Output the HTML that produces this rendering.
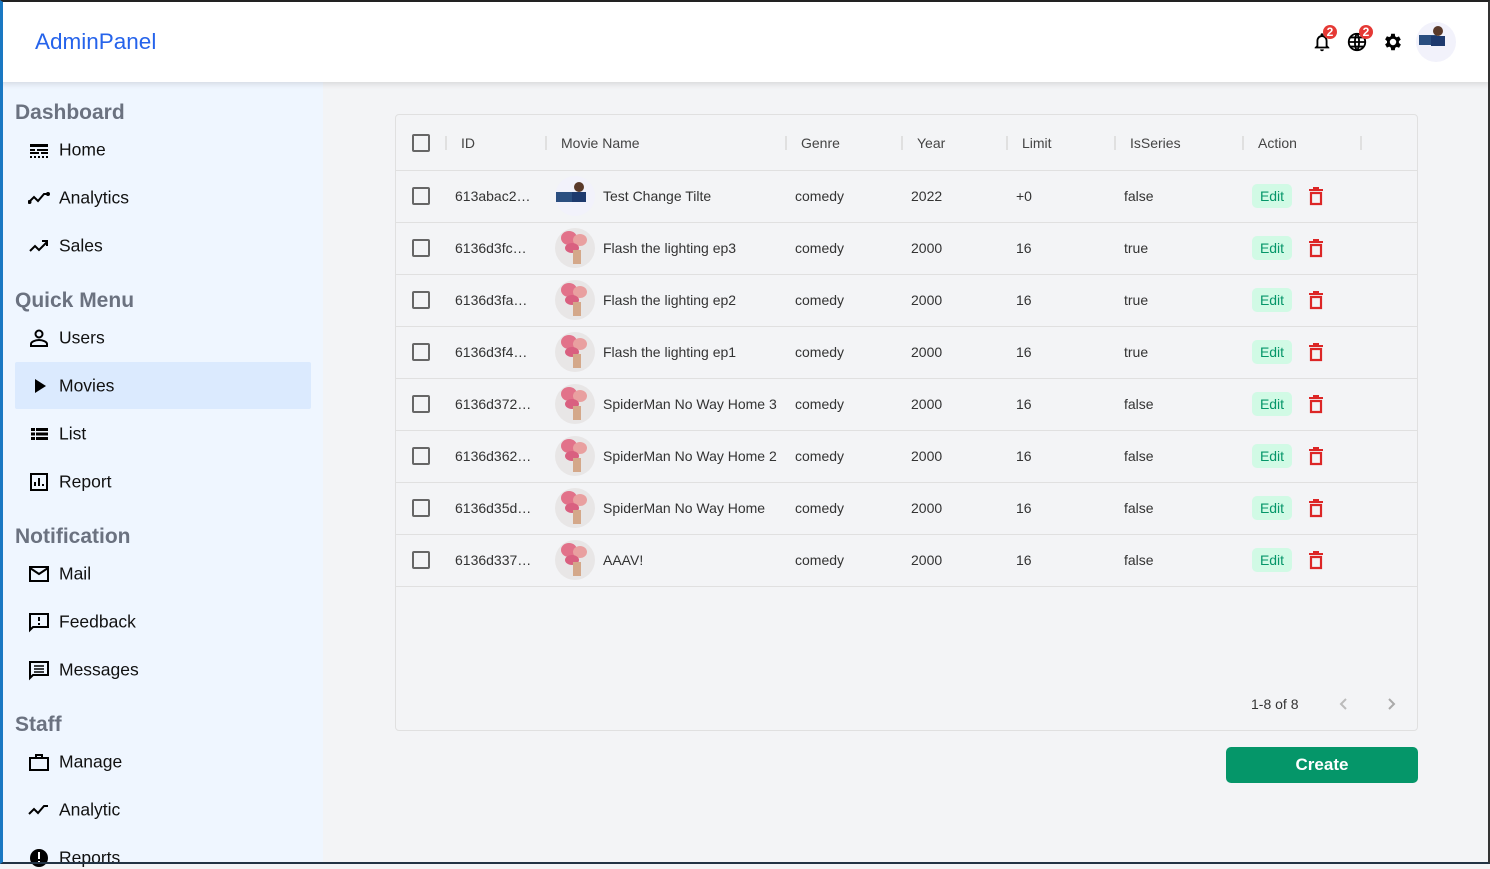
<!DOCTYPE html>
<html><head><meta charset="utf-8"><style>
*{box-sizing:border-box;margin:0;padding:0}
body{width:1490px;height:864px;overflow:hidden;background:#f3f4f6;font-family:"Liberation Sans",sans-serif;position:relative}
.frame{position:absolute;inset:0;border-top:2px solid #222;border-left:3px solid #1a78c2;border-right:2px solid #333;border-bottom:2px solid #234;pointer-events:none;z-index:10}
.hdr{position:absolute;left:0;top:0;width:1490px;height:82px;background:#fff;box-shadow:0 2px 6px rgba(0,0,0,.12);z-index:2}
.logo{position:absolute;left:35px;top:29px;font-size:22.5px;color:#2563eb}
.side{position:absolute;left:0;top:82px;width:323px;height:782px;background:#eff6ff}
.h{position:absolute;left:15px;font-size:21px;font-weight:bold;color:#6b7280;white-space:nowrap}
.it{position:absolute;left:59px;font-size:17.5px;color:#111;transform:translateY(-50%);white-space:nowrap;margin-top:1px}
.ic{position:absolute;left:28px;width:22px;height:22px;transform:translateY(-50%)}
.sel{position:absolute;left:15px;top:362px;width:296px;height:47px;background:#dbeafe;border-radius:2px}
.tbl{position:absolute;left:395px;top:114px;width:1023px;height:617px;border:1px solid #e0e0e0;border-radius:4px;background:#f3f4f6}
.t{position:absolute;font-size:14px;color:#333;transform:translateY(-50%);white-space:nowrap}
.th{color:#444}
.sep{position:absolute;width:2px;height:14px;background:#e0e0e0}
.cb{position:absolute;left:16px;width:18px;height:18px;border:2px solid #666;border-radius:2px}
.line{position:absolute;left:0;width:1021px;height:1px;background:#e0e0e0}
.av{position:absolute;left:159px;width:40px;height:40px;border-radius:50%;background:#e6e6e6;overflow:hidden}
.edit{position:absolute;left:856px;width:40px;height:24px;background:#d1fae5;color:#059669;border-radius:5px;font-size:14px;text-align:center;line-height:24px}
.btn{position:absolute;left:1226px;top:747px;width:192px;height:36px;background:#059669;color:#fff;border-radius:5px;font-size:17px;font-weight:bold;text-align:center;line-height:36px}
.badge{position:absolute;width:14px;height:14px;border-radius:50%;background:#e53935;color:#fff;font-size:12px;font-weight:bold;text-align:center;line-height:14px}
</style></head><body>
<div class="hdr"><div class="logo">AdminPanel</div>
<svg style="position:absolute;left:1311px;top:31px" width="22" height="22" viewBox="0 0 24 24"><path d="M12 22a2 2 0 0 0 2-2h-4a2 2 0 0 0 2 2zm6-6V11c0-3-1.6-5.6-4.5-6.3V4a1.5 1.5 0 0 0-3 0v.7C7.6 5.4 6 8 6 11v5l-2 2v1h16v-1zm-2 1H8v-6c0-2.5 1.5-4.5 4-4.5s4 2 4 4.5z"/></svg>
<div class="badge" style="left:1323px;top:25px">2</div>
<svg style="position:absolute;left:1346px;top:31px" width="22" height="22" viewBox="0 0 24 24" fill="none" stroke="#000" stroke-width="2"><circle cx="12" cy="12" r="9"/><path d="M3 12h18M12 3c3 3 3 15 0 18M12 3c-3 3-3 15 0 18M5 7h14M5 17h14"/></svg>
<div class="badge" style="left:1359px;top:25px">2</div>
<svg style="position:absolute;left:1382px;top:31px" width="22" height="22" viewBox="0 0 24 24"><path d="M19.4 13a7.5 7.5 0 0 0 0-2l2.1-1.6-2-3.5-2.5 1a7 7 0 0 0-1.7-1L15 3h-4l-.4 2.7a7 7 0 0 0-1.7 1l-2.5-1-2 3.5L6.5 11a7.5 7.5 0 0 0 0 2l-2.1 1.6 2 3.5 2.5-1a7 7 0 0 0 1.7 1L11 21h4l.4-2.7a7 7 0 0 0 1.7-1l2.5 1 2-3.5zM13 15.5a3.5 3.5 0 1 1 0-7 3.5 3.5 0 0 1 0 7z" transform="translate(-1 0)"/></svg>
<div style="position:absolute;left:1416px;top:22px;width:40px;height:40px;border-radius:50%;background:#f2f2fb"><div style="position:absolute;left:3px;top:13px;width:18px;height:10px;background:#2b4f80"></div><div style="position:absolute;left:17px;top:4px;width:10px;height:10px;border-radius:50%;background:#5a3a2a"></div><div style="position:absolute;left:15px;top:14px;width:14px;height:10px;background:#1e3a6e"></div></div>
</div>
<div class="side"></div>
<div style="position:absolute;left:0;top:0">
<div class="sel"></div>
<div class="h" style="top:101px">Dashboard</div>
<div class="h" style="top:289px">Quick Menu</div>
<div class="h" style="top:525px">Notification</div>
<div class="h" style="top:713px">Staff</div>

<svg class="ic" style="top:150px" viewBox="0 0 22 22"><rect x="2" y="5" width="18" height="3"/><rect x="2" y="10" width="5" height="2"/><rect x="9" y="10" width="11" height="2"/><rect x="2" y="13" width="9" height="2"/><rect x="13" y="13" width="7" height="2"/><path d="M2 17h2v2H2zm4 0h2v2H6zm4 0h2v2h-2zm4 0h2v2h-2zm4 0h2v2h-2z"/></svg>
<div class="it" style="top:149px">Home</div>
<svg class="ic" style="top:198px" viewBox="0 0 22 22" fill="none" stroke="#000" stroke-width="2"><path d="M1 15l5-5 4 4 6-7 4 0"/><circle cx="1.5" cy="15" r="1" fill="#000"/><circle cx="20" cy="7" r="1" fill="#000"/></svg>
<div class="it" style="top:197px">Analytics</div>
<svg class="ic" style="top:246px" viewBox="0 0 22 22" fill="none" stroke="#000" stroke-width="2"><path d="M2 16l5-5 4 4 8-8M14 6h5v5"/></svg>
<div class="it" style="top:245px">Sales</div>
<svg class="ic" style="top:338px" viewBox="0 0 22 22" fill="none" stroke="#000" stroke-width="2"><circle cx="11" cy="7" r="3.5"/><path d="M3 19v-2c0-2 4-4 8-4s8 2 8 4v2z"/></svg>
<div class="it" style="top:337px">Users</div>
<svg class="ic" style="top:386px" viewBox="0 0 22 22"><path d="M7 4l11 7-11 7z"/></svg>
<div class="it" style="top:385px">Movies</div>
<svg class="ic" style="top:434px" viewBox="0 0 22 22"><path d="M3 5h4v3H3zm5 0h12v3H8zM3 9.5h4v3H3zm5 0h12v3H8zM3 14h4v3H3zm5 0h12v3H8z"/></svg>
<div class="it" style="top:433px">List</div>
<svg class="ic" style="top:482px" viewBox="0 0 22 22" fill="none" stroke="#000" stroke-width="2"><rect x="3" y="3" width="16" height="16"/><path d="M7 15v-4M11 15V7M15 15v-2"/></svg>
<div class="it" style="top:481px">Report</div>
<svg class="ic" style="top:574px" viewBox="0 0 22 22" fill="none" stroke="#000" stroke-width="2"><rect x="2" y="4" width="18" height="14"/><path d="M2 5l9 6 9-6"/></svg>
<div class="it" style="top:573px">Mail</div>
<svg class="ic" style="top:622px" viewBox="0 0 22 22" fill="none" stroke="#000" stroke-width="2"><path d="M2 3h18v13H5l-3 3z"/><path d="M11 6v4M11 12v2"/></svg>
<div class="it" style="top:621px">Feedback</div>
<svg class="ic" style="top:670px" viewBox="0 0 22 22" fill="none" stroke="#000" stroke-width="2"><path d="M2 3h18v13H5l-3 3z"/><path d="M6 7h10M6 10h10M6 13h10" stroke-width="1.5"/></svg>
<div class="it" style="top:669px">Messages</div>
<svg class="ic" style="top:762px" viewBox="0 0 22 22" fill="none" stroke="#000" stroke-width="2"><rect x="2" y="7" width="18" height="12"/><path d="M8 7V4h6v3"/></svg>
<div class="it" style="top:761px">Manage</div>
<svg class="ic" style="top:810px" viewBox="0 0 22 22" fill="none" stroke="#000" stroke-width="2"><path d="M1 15l5-5 4 4 6-7 4 0"/></svg>
<div class="it" style="top:809px">Analytic</div>
<svg class="ic" style="top:858px" viewBox="0 0 22 22"><circle cx="11" cy="11" r="9"/><path d="M10 5h2v7h-2zm0 9h2v2h-2z" fill="#fff"/></svg>
<div class="it" style="top:857px">Reports</div>
</div>

<div class="tbl">
<div class="cb" style="top:19px"></div>
<div class="sep" style="left:49px;top:21px"></div><div class="sep" style="left:149px;top:21px"></div><div class="sep" style="left:389px;top:21px"></div><div class="sep" style="left:505px;top:21px"></div><div class="sep" style="left:610px;top:21px"></div><div class="sep" style="left:718px;top:21px"></div><div class="sep" style="left:846px;top:21px"></div><div class="sep" style="left:964px;top:21px"></div>
<div class="t th" style="left:65px;top:28px">ID</div><div class="t th" style="left:165px;top:28px">Movie Name</div><div class="t th" style="left:405px;top:28px">Genre</div><div class="t th" style="left:521px;top:28px">Year</div><div class="t th" style="left:626px;top:28px">Limit</div><div class="t th" style="left:734px;top:28px">IsSeries</div><div class="t th" style="left:862px;top:28px">Action</div>
<div class="line" style="top:55px"></div>

<div id="rows"></div>
<div class="t" style="left:855px;top:589px;color:#333">1-8 of 8</div>
<svg style="position:absolute;left:940px;top:581px" width="16" height="16" viewBox="0 0 16 16" fill="none" stroke="#bbb" stroke-width="2"><path d="M10 3L5 8l5 5"/></svg>
<svg style="position:absolute;left:987px;top:581px" width="16" height="16" viewBox="0 0 16 16" fill="none" stroke="#aaa" stroke-width="2"><path d="M6 3l5 5-5 5"/></svg>
</div>
<div class="btn">Create</div>
<div class="frame"></div>
<script>
var d=[["613abac2…","Test Change Tilte","2022","+0","false",1],["6136d3fc…","Flash the lighting ep3","2000","16","true"],["6136d3fa…","Flash the lighting ep2","2000","16","true"],["6136d3f4…","Flash the lighting ep1","2000","16","true"],["6136d372…","SpiderMan No Way Home 3","2000","16","false"],["6136d362…","SpiderMan No Way Home 2","2000","16","false"],["6136d35d…","SpiderMan No Way Home","2000","16","false"],["6136d337…","AAAV!","2000","16","false"]];
var h="";d.forEach(function(r,i){var c=81+i*52;
var av=r[5]?'<div class="av" style="top:'+(c-20)+'px;background:#f2f2fb"><div style="position:absolute;left:1px;top:16px;width:20px;height:10px;background:#2b4f80"></div><div style="position:absolute;left:19px;top:6px;width:10px;height:10px;border-radius:50%;background:#5a3a2a"></div><div style="position:absolute;left:17px;top:16px;width:14px;height:10px;background:#1e3a6e"></div></div>':'<div class="av" style="top:'+(c-20)+'px;background:#e8e6e6"><div style="position:absolute;left:6px;top:3px;width:16px;height:14px;border-radius:50%;background:#e2728a"></div><div style="position:absolute;left:18px;top:6px;width:14px;height:12px;border-radius:50%;background:#e9a0a0"></div><div style="position:absolute;left:10px;top:15px;width:14px;height:10px;border-radius:50%;background:#d96080"></div><div style="position:absolute;left:18px;top:22px;width:8px;height:14px;background:#d4a88a"></div></div>';
h+='<div class="cb" style="top:'+(c-9)+'px"></div><div class="t" style="left:59px;top:'+c+'px">'+r[0]+'</div>'+av+'<div class="t" style="left:207px;top:'+c+'px">'+r[1]+'</div><div class="t" style="left:399px;top:'+c+'px">comedy</div><div class="t" style="left:515px;top:'+c+'px">'+r[2]+'</div><div class="t" style="left:620px;top:'+c+'px">'+r[3]+'</div><div class="t" style="left:728px;top:'+c+'px">'+r[4]+'</div><div class="edit" style="top:'+(c-12)+'px">Edit</div><svg style="position:absolute;left:912px;top:'+(c-10)+'px" width="16" height="20" viewBox="0 0 16 20"><path d="M5 1h6v2h4v2H1V3h4z" fill="#dc2626"/><path d="M3 7h10v11H3z" fill="none" stroke="#dc2626" stroke-width="2.2"/></svg><div class="line" style="top:'+(c+26)+'px"></div>';});
document.getElementById("rows").innerHTML=h;
</script>
</body></html>
